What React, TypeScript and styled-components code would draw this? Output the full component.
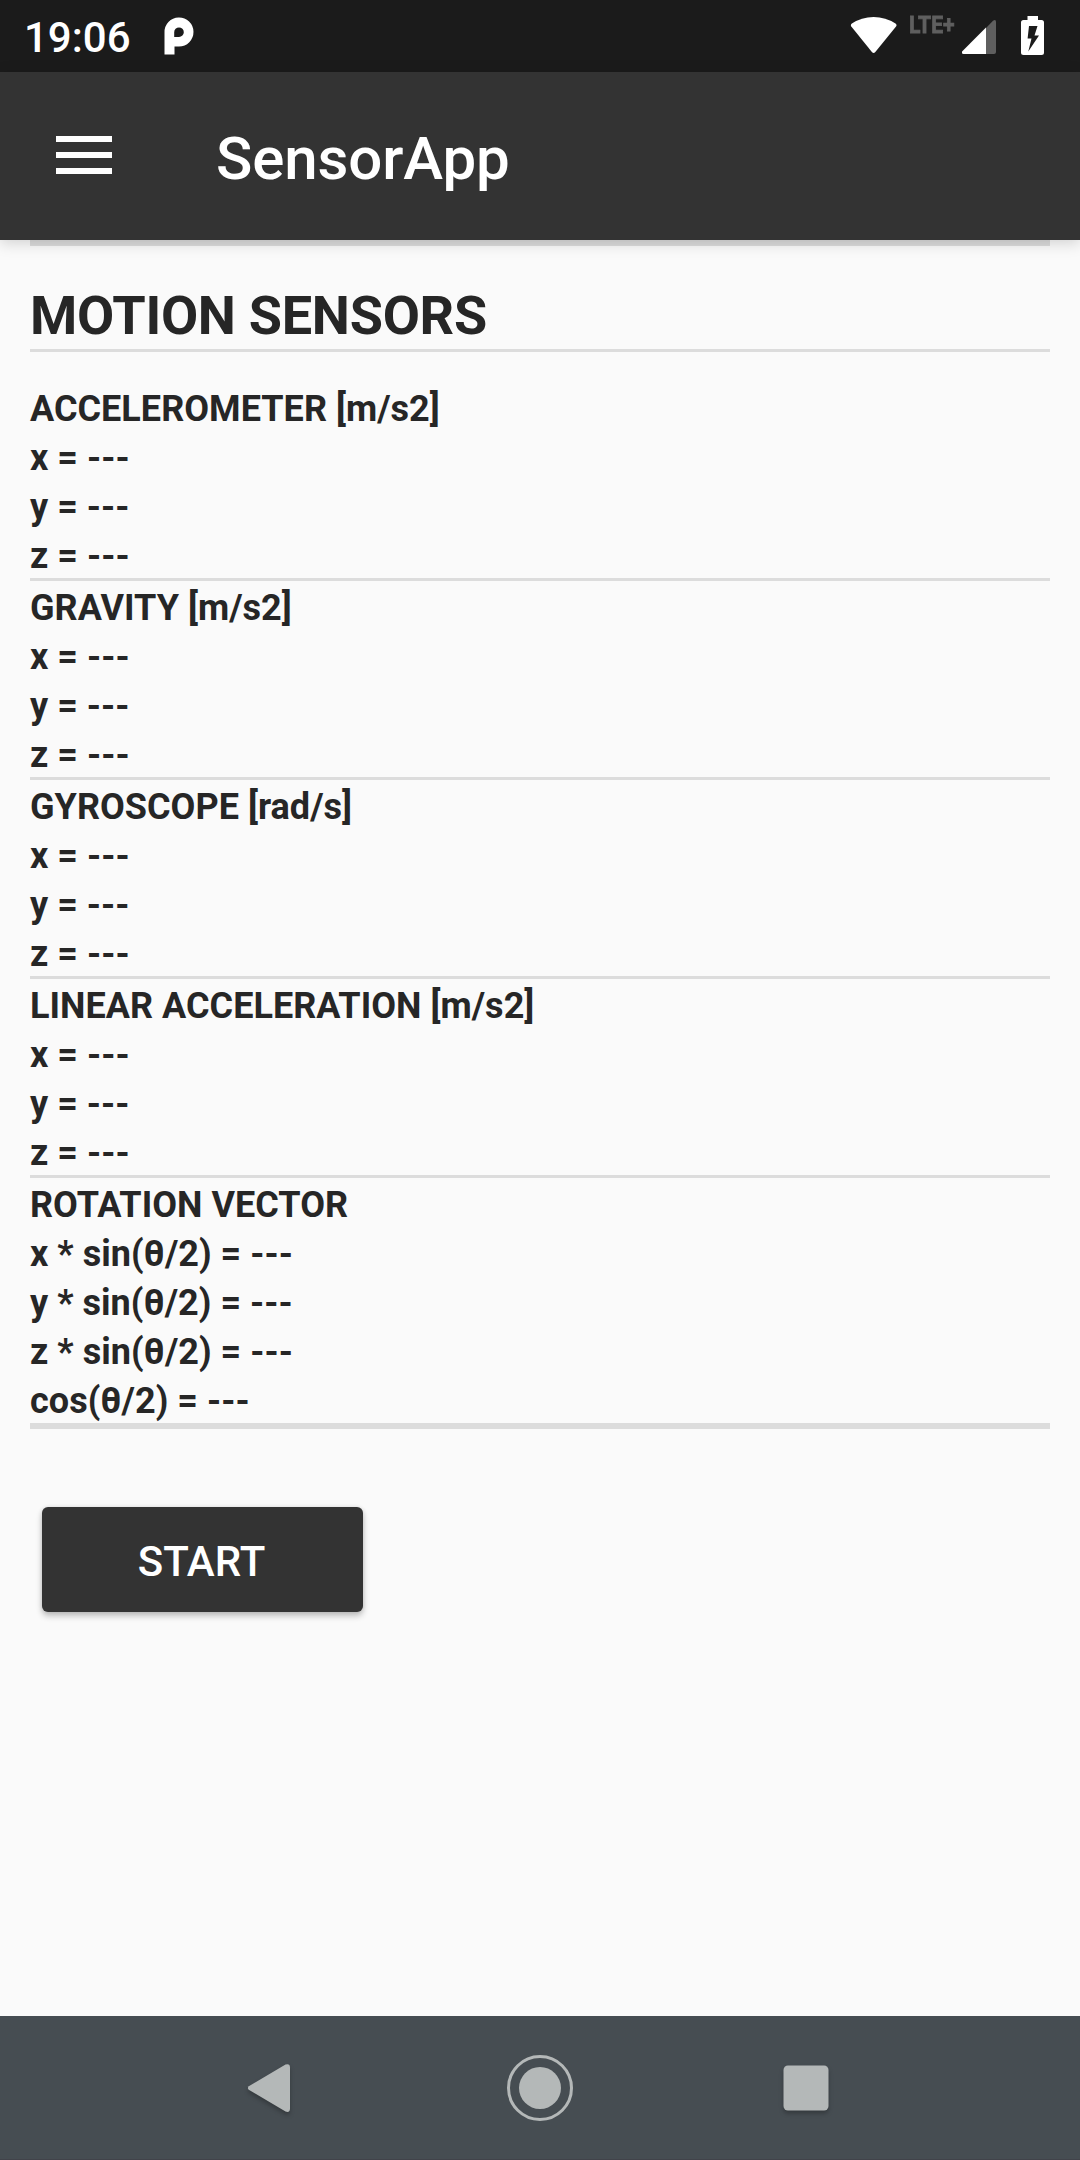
import React from "react";
import styled, { createGlobalStyle } from "styled-components";

const GlobalStyle = createGlobalStyle`
  * { box-sizing: border-box; }
  body { margin: 0; background: #fafafa; }
`;

const Screen = styled.div`
  width: 1080px;
  height: 2160px;
  display: flex;
  flex-direction: column;
  overflow: hidden;
  background: #fafafa;
  color: #262626;
  font-family: Roboto, "Noto Sans", sans-serif;
`;

const StatusBar = styled.div`
  height: 72px;
  flex: none;
  display: flex;
  align-items: flex-start;
  padding: 0 36px 0 24px;
  background: #1b1b1b;
  color: #fff;
`;

const Clock = styled.div`
  width: 136px;
  font-size: 42px;
  font-weight: 500;
  line-height: 76px;
`;

const StatusIcons = styled.div`
  margin-left: auto;
  display: flex;
  align-items: flex-start;
`;

const NetworkLabel = styled.span`
  width: 45px;
  margin: 13px 8px 0 12px;
  font-size: 24px;
  line-height: 24px;
  font-weight: 700;
  color: #5f5f5f;
  white-space: nowrap;
  -webkit-text-stroke: 0.8px #5f5f5f;
  transform: scaleX(0.88);
  transform-origin: 0 0;
`;

const Glyph = styled.svg<{ $gap?: number }>`
  display: block;
  flex: none;
  margin-left: ${(p) => p.$gap ?? 0}px;
`;

const AppBar = styled.header`
  position: relative;
  height: 168px;
  flex: none;
  display: flex;
  align-items: center;
  padding-left: 56px;
  background: #333;
  color: #fff;
  box-shadow: 0 3px 14px rgba(0, 0, 0, 0.17);
`;

const MenuButton = styled.button`
  width: 56px;
  height: 38px;
  margin: 0 104px 2px 0;
  padding: 0;
  border: 0;
  background: none;
  display: flex;
  flex-direction: column;
  justify-content: space-between;
`;

const MenuLine = styled.span`
  height: 6px;
  width: 100%;
  background: #fff;
`;

const Title = styled.h1`
  margin: 6px 0 0;
  font-size: 60px;
  font-weight: 500;
  line-height: 70px;
  letter-spacing: -0.12px;
`;

const Content = styled.main`
  flex: 1;
  padding: 0 30px;
`;

const Rule = styled.div<{ $thick?: boolean }>`
  height: ${(p) => (p.$thick ? 6 : 3)}px;
  background: #dcdcdc;
`;

const Heading = styled.h2`
  margin: 0;
  padding-top: 38px;
  height: 103px;
  font-size: 54px;
  font-weight: 700;
  line-height: 64px;
  letter-spacing: -0.28px;
`;

const Sensors = styled.div`
  padding-top: 30px;
`;

const Line = styled.div`
  height: 49px;
  line-height: 55px;
  font-size: 36px;
  font-weight: 700;
  letter-spacing: 0.03px;
  white-space: pre;
`;

const StartButton = styled.button`
  display: block;
  width: 321px;
  height: 105px;
  margin: 78px 0 0 12px;
  padding: 5px 2px 0 0;
  border: 0;
  border-radius: 6px;
  background: #333;
  color: #fff;
  font: 500 42px/50px Roboto, sans-serif;
  box-shadow: 0 4px 6px rgba(0, 0, 0, 0.24), 0 0 4px rgba(0, 0, 0, 0.1);
`;

const NavBar = styled.nav`
  height: 144px;
  flex: none;
  display: flex;
  align-items: center;
  justify-content: space-between;
  padding: 0 234px;
  background: #464d52;
  box-shadow: inset 0 -1px 0 #41434a;
`;

const NavButton = styled.button`
  width: 80px;
  height: 80px;
  padding: 0;
  border: 0;
  background: none;
`;

const xyz = ["x = ---", "y = ---", "z = ---"];
const sensors = [
  { name: "ACCELEROMETER [m/s2]", values: xyz },
  { name: "GRAVITY [m/s2]", values: xyz },
  { name: "GYROSCOPE [rad/s]", values: xyz },
  { name: "LINEAR ACCELERATION [m/s2]", values: xyz },
  {
    name: "ROTATION VECTOR",
    values: ["x * sin(θ/2) = ---", "y * sin(θ/2) = ---", "z * sin(θ/2) = ---", "cos(θ/2) = ---"],
  },
];

export default function App() {
  return (
    <Screen>
      <GlobalStyle />
      <StatusBar>
        <Clock>19:06</Clock>
        <Glyph width="40" height="72" viewBox="160 0 40 72">
          <path
            fill="#fff"
            fillRule="evenodd"
            d="M164.500 54.500V32.500a14.500 14.500 0 1 1 14.500 14H174.500V54.500ZM174.200 37h4.800a4.800 4.800 0 1 0-4.800-4.800Z"
          />
        </Glyph>
        <StatusIcons>
          <Glyph width="47" height="72" viewBox="850 0 47 72">
            <path fill="#fff" d="M851.300 26.500Q850.200 24.800 851.900 23.600Q861.500 17 873.600 17Q885.700 17 895.500 23.600Q897.200 24.800 896 26.500L875.300 52Q873.600 53.800 871.900 52Z" />
          </Glyph>
          <NetworkLabel>LTE+</NetworkLabel>
          <Glyph width="34" height="72" viewBox="962 0 34 72">
            <path fill="#5f5f5f" d="M986 28L993 20.700Q996 18.800 996 22V52Q996 54 994 54H986Z" />
            <path fill="#fff" d="M986 27.500V54H963.500Q961 53.500 962.300 51.200Z" />
          </Glyph>
          <Glyph $gap={25} width="23" height="72" viewBox="1021 0 23 72">
            <path
              fill="#fff"
              fillRule="evenodd"
              d="M1027.500 16H1038V20H1041.500Q1044 20 1044 22.500V52.500Q1044 55 1041.500 55H1023.500Q1021 55 1021 52.500V22.500Q1021 20 1023.500 20H1027.500ZM1029 26L1027.600 38.500H1031.500L1028.300 51.500L1039 35.500H1034.500L1037.500 26Z"
            />
          </Glyph>
        </StatusIcons>
      </StatusBar>
      <AppBar>
        <MenuButton aria-label="Menu">
          <MenuLine />
          <MenuLine />
          <MenuLine />
        </MenuButton>
        <Title>SensorApp</Title>
      </AppBar>
      <Content>
        <Rule $thick />
        <Heading>MOTION SENSORS</Heading>
        <Rule />
        <Sensors>
          {sensors.map((s, i) => (
            <section key={s.name}>
              <Line>{s.name}</Line>
              {s.values.map((v) => (
                <Line key={v}>{v}</Line>
              ))}
              <Rule $thick={i === sensors.length - 1} />
            </section>
          ))}
        </Sensors>
        <StartButton>START</StartButton>
      </Content>
      <NavBar>
        <NavButton aria-label="Back">
          <Glyph width="80" height="80" viewBox="-40 -40 80 80">
            <path
              fill="#b4b8b8"
              style={{ filter: "drop-shadow(0 3px 2px rgba(0,0,0,.25))" }}
              d="M-25.200-1.800L11.500-23.500Q16-25 16-20.500V20.500Q16 25 11.500 23.500L-25.200 1.800Q-27 0-25.200-1.800Z"
            />
          </Glyph>
        </NavButton>
        <NavButton aria-label="Home">
          <Glyph width="80" height="80" viewBox="-40 -40 80 80">
            <circle r="31.500" fill="none" stroke="#b4b8b8" strokeWidth="3" />
            <circle r="21" fill="#b4b8b8" />
          </Glyph>
        </NavButton>
        <NavButton aria-label="Recents">
          <Glyph width="80" height="80" viewBox="-40 -40 80 80">
            <rect
              x="-22.500"
              y="-22.500"
              width="45"
              height="45"
              rx="4.500"
              fill="#b4b8b8"
              style={{ filter: "drop-shadow(0 3px 2px rgba(0,0,0,.25))" }}
            />
          </Glyph>
        </NavButton>
      </NavBar>
    </Screen>
  );
}
